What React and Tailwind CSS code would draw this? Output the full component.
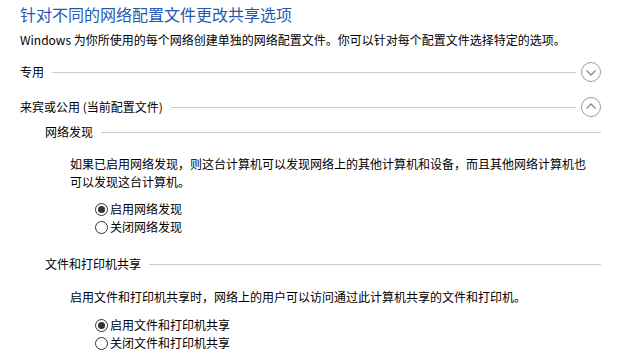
import React from 'react';

const font = { fontFamily: '"Noto Sans CJK SC", "Noto Sans", sans-serif' };

const CircleChevron = ({ up }) => (
  <svg width="20" height="20" viewBox="0 0 20 20" className="shrink-0">
    <circle cx="10" cy="10" r="9.5" fill="none" stroke="#9a9a9a" strokeWidth="1" />
    {up ? (
      <path d="M5.5 11.5 L10 7 L14.5 11.5" fill="none" stroke="#8a8a8a" strokeWidth="1.3" />
    ) : (
      <path d="M5.5 8.5 L10 13 L14.5 8.5" fill="none" stroke="#8a8a8a" strokeWidth="1.3" />
    )}
  </svg>
);

const Radio = ({ checked, label }) => (
  <div className="flex items-center h-[18px]">
    <svg width="13" height="13" viewBox="0 0 13 13" className="shrink-0 ml-[95px] mr-[2px]">
      <circle cx="6.5" cy="6.5" r="6" fill="#fff" stroke="#333" strokeWidth="1" />
      {checked && <circle cx="6.5" cy="6.5" r="3.5" fill="#333" />}
    </svg>
    <span>{label}</span>
  </div>
);

// Section header with a rule running to the right edge
const Group = ({ title, indent, children }) => (
  <div className={`flex items-center h-[20px] ${indent ? 'pl-[25px]' : ''}`}>
    <span className="whitespace-nowrap">{title}</span>
    <div className="flex-1 h-px bg-[#cccccc] ml-[8px]" />
    {children}
  </div>
);

export default function App() {
  return (
    <div className="w-[639px] h-[356px] bg-white overflow-hidden text-[12px] text-black" style={font}>
      <div className="pl-[20px] pr-[38px] pt-[4px]">
        <h1 className="text-[16px] leading-[20px] text-[#2459b3]">针对不同的网络配置文件更改共享选项</h1>
        <p className="mt-[7px] leading-[18px]">Windows 为你所使用的每个网络创建单独的网络配置文件。你可以针对每个配置文件选择特定的选项。</p>

        <div className="mt-[13px]">
          <Group title="专用">
            <div className="ml-[5px]"><CircleChevron /></div>
          </Group>
        </div>

        <div className="mt-[15px]">
          <Group title="来宾或公用 (当前配置文件)">
            <div className="ml-[5px]"><CircleChevron up /></div>
          </Group>
        </div>

        <div className="mt-[5px]">
          <Group title="网络发现" indent />
        </div>
        <p className="mt-[13px] pl-[50px] leading-[18px]">
          如果已启用网络发现，则这台计算机可以发现网络上的其他计算机和设备，而且其他网络计算机也<br />
          可以发现这台计算机。
        </p>
        <div className="mt-[9px] -ml-[20px]">
          <Radio checked label="启用网络发现" />
          <Radio label="关闭网络发现" />
        </div>

        <div className="mt-[18px]">
          <Group title="文件和打印机共享" indent />
        </div>
        <p className="mt-[14px] pl-[50px] leading-[18px]">启用文件和打印机共享时，网络上的用户可以访问通过此计算机共享的文件和打印机。</p>
        <div className="mt-[10px] -ml-[20px]">
          <Radio checked label="启用文件和打印机共享" />
          <Radio label="关闭文件和打印机共享" />
        </div>
      </div>
    </div>
  );
}
